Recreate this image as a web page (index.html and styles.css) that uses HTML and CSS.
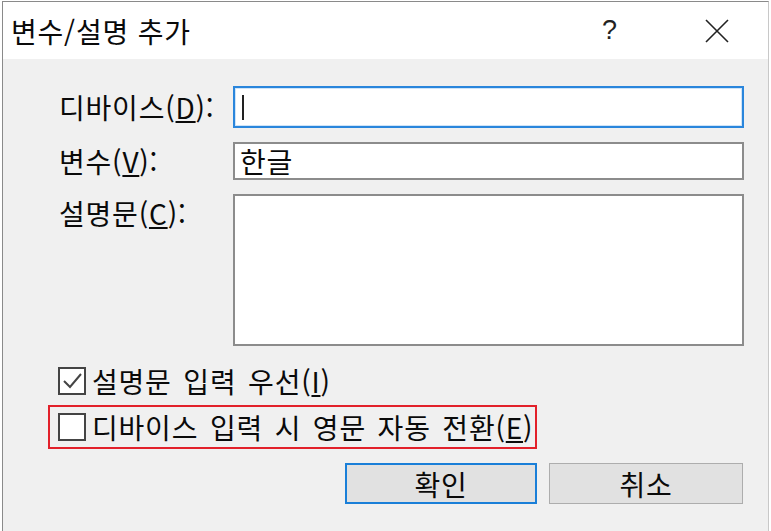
FILE: index.html
```html
<!DOCTYPE html>
<html lang="ko">
<head>
<meta charset="UTF-8" />
<meta name="viewport" content="width=device-width, initial-scale=1" />
<title>변수/설명 추가</title>
<link rel="stylesheet" href="styles.css">
</head>
<body>
  <div class="window">
    <!-- Title bar -->
    <div class="titlebar">
      <span class="title">변수/설명 추가</span>
      <span class="help">?</span>
      <span class="close">
        <svg width="24" height="24" viewBox="0 0 24 24">
          <path d="M1 1 L23 23 M23 1 L1 23" stroke="#222" stroke-width="1.6" fill="none" />
        </svg>
      </span>
    </div>

    <!-- Dialog body -->
    <div class="content">
      <div class="form">
        <label class="label">디바이스(<u>D</u>):</label>
        <div class="field focused"><span class="caret"></span></div>

        <label class="label">변수(<u>V</u>):</label>
        <div class="field">한글</div>

        <label class="label label-top">설명문(<u>C</u>):</label>
        <div class="field area"></div>
      </div>

      <div class="check-row">
        <span class="box">
          <svg width="22" height="22" viewBox="0 0 22 22">
            <path d="M3 11 L9 17 L20 4" stroke="#444" stroke-width="2" fill="none" />
          </svg>
        </span>
        <span>설명문 입력 우선(<u>I</u>)</span>
      </div>

      <div class="check-row highlight">
        <span class="box"></span>
        <span>디바이스 입력 시 영문 자동 전환(<u>E</u>)</span>
      </div>

      <div class="buttons">
        <button class="btn default">확인</button>
        <button class="btn">취소</button>
      </div>
    </div>
  </div>
</body>
</html>
```

FILE: styles.css
```css
* {
  margin: 0;
  padding: 0;
  box-sizing: border-box;
}

html, body {
  height: 100%;
  overflow: hidden;
  background: #fff;
  font-family: "Noto Sans CJK KR", "Noto Sans", sans-serif;
  font-size: 28px;
  letter-spacing: 0.8px;
  color: #0a0a0a;
}

body {
  padding: 1px 2px 0 2px;
}

.window {
  width: 767px;
  height: 100%;
  border: 1px solid #8a8a8a;
  border-bottom: none;
  border-right-color: #c8c8c8;
  display: flex;
  flex-direction: column;
}

/* Title bar */
.titlebar {
  height: 57px;
  background: #fff;
  display: flex;
  align-items: center;
  padding-left: 8px;
}

.title {
  flex: 1;
  line-height: 1;
}

.help {
  width: 60px;
  text-align: center;
  margin-right: 47px;
  font-family: "Liberation Sans", sans-serif;
  font-size: 27px;
  color: #222;
}

.close {
  width: 60px;
  display: flex;
  justify-content: center;
  margin-right: 21px;
}

/* Content */
.content {
  flex: 1;
  background: #f0f0f0;
  padding: 27px 25px 0 56px;
}

.form {
  display: grid;
  grid-template-columns: 174px 511px;
  row-gap: 14px;
  align-items: center;
}

.label {
  line-height: 38px;
  white-space: nowrap;
}

.label-top {
  align-self: start;
}

.field {
  height: 38px;
  background: #fff;
  border: 2px solid #8c8c8c;
  padding-left: 5px;
  line-height: 34px;
}

.field.focused {
  height: 42px;
  border-color: #2a86dc;
  box-shadow: inset 0 0 0 1px #cfe4f8;
  display: flex;
  align-items: center;
}

.caret {
  width: 2px;
  height: 25px;
  background: #222;
  margin-left: 2px;
}

.field.area {
  height: 152px;
}

/* Checkboxes */
.check-row {
  display: flex;
  align-items: center;
  gap: 6px;
  height: 29px;
  margin-top: 20px;
  margin-left: -1px;
  white-space: nowrap;
  word-spacing: 3px;
}

.check-row.highlight {
  width: 489px;
  height: 44px;
  margin-top: 10px;
  margin-left: -11px;
  padding-left: 8px;
  border: 2px solid #e2202a;
}

.box {
  width: 28px;
  height: 28px;
  border: 2px solid #444;
  background: #fff;
  display: flex;
  align-items: center;
  justify-content: center;
}

/* Buttons */
.buttons {
  display: flex;
  justify-content: flex-end;
  gap: 12px;
  margin-top: 14px;
}

.btn {
  width: 194px;
  height: 41px;
  background: #e1e1e1;
  border: 1px solid #adadad;
  font-family: inherit;
  font-size: 28px;
  letter-spacing: 0.8px;
  color: #0a0a0a;
  line-height: 1;
}

.btn.default {
  width: 192px;
  border: 2px solid #1a7fd8;
}
```
